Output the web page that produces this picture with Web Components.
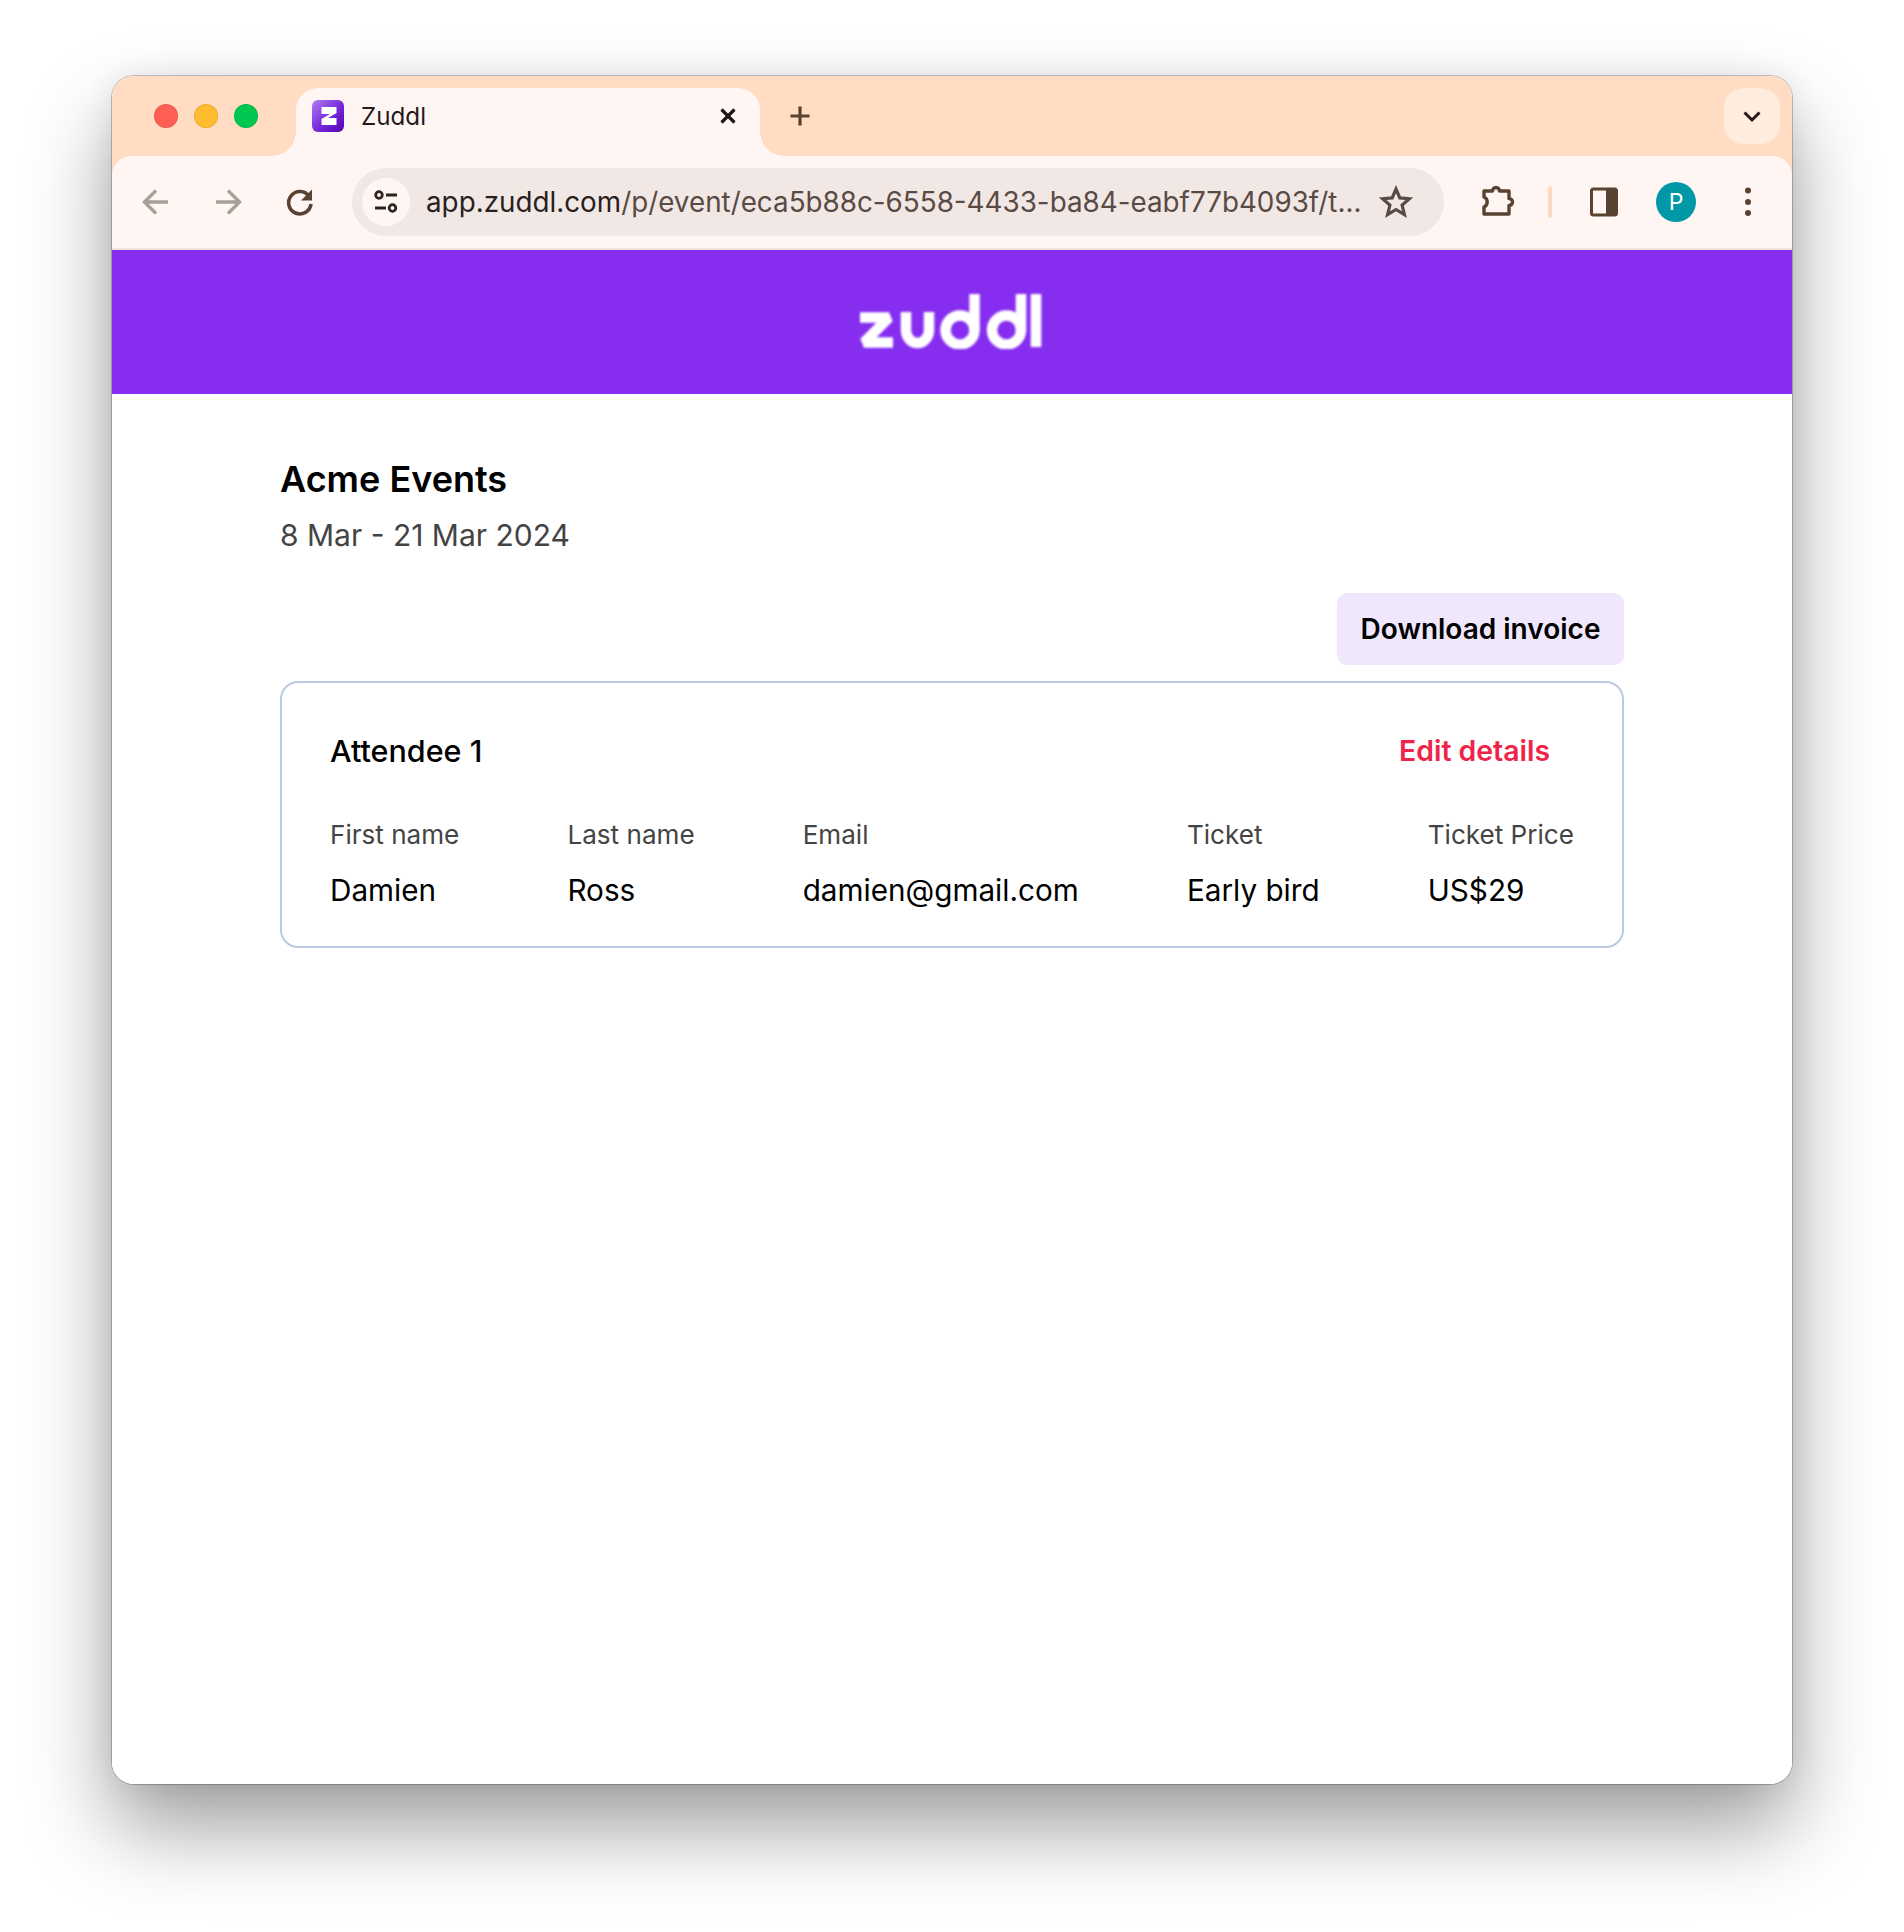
<!DOCTYPE html>
<html lang="en">
<head>
<meta charset="utf-8">
<title>Zuddl</title>
<style>
  html, body { margin: 0; background: #fff; }
  body { font-family: "Inter", "Liberation Sans", sans-serif; }
</style>
</head>
<body>
<browser-window>
  <tab-strip title-text="Zuddl"></tab-strip>
  <browser-toolbar domain="app.zuddl.com" path="/p/event/eca5b88c-6558-4433-ba84-eabf77b4093f/t..."></browser-toolbar>
  <brand-bar></brand-bar>
  <event-page name="Acme Events" dates="8 Mar - 21 Mar 2024">
    <attendee-card heading="Attendee 1">
      <attendee-field label="First name" value="Damien"></attendee-field>
      <attendee-field label="Last name" value="Ross"></attendee-field>
      <attendee-field label="Email" value="damien@gmail.com"></attendee-field>
      <attendee-field label="Ticket" value="Early bird"></attendee-field>
      <attendee-field label="Ticket Price" value="US$29"></attendee-field>
    </attendee-card>
  </event-page>
</browser-window>

<script>
class BrowserWindow extends HTMLElement {
  constructor() {
    super();
    this.attachShadow({mode: "open"}).innerHTML = `
    <style>
      :host {
        display: block;
        box-sizing: border-box;
        padding: 76px 112px 148px;
        height: 1932px;
        background: #fff;
      }
      .frame {
        display: flex;
        flex-direction: column;
        height: 1708px;
        background: #fff;
        border-radius: 22px;
        overflow: hidden;
      }
      .shadow {
        border-radius: 22px;
        box-shadow: 0 0 0 1px rgba(0,0,0,.22), 0 44px 84px rgba(0,0,0,.38), 0 0 30px rgba(0,0,0,.08);
      }
    </style>
    <div class="shadow"><div class="frame"><slot></slot></div></div>`;
  }
}

class TabStrip extends HTMLElement {
  constructor() {
    super();
    this.attachShadow({mode: "open"});
  }
  connectedCallback() {
    const title = this.getAttribute("title-text");
    this.shadowRoot.innerHTML = `
    <style>
      :host {
        display: flex;
        height: 80px;
        box-sizing: border-box;
        padding: 12px 12px 0 42px;
        background: #ffdcc2;
      }
      .lights { display: flex; gap: 16px; align-items: center; height: 56px; }
      .lights i { display: block; width: 24px; height: 24px; border-radius: 50%; box-sizing: border-box; border: 1px solid rgba(0,0,0,.08); }
      .tab {
        position: relative;
        display: flex;
        align-items: center;
        width: 464px;
        height: 68px;
        box-sizing: border-box;
        margin-left: 38px;
        padding: 0 16px 12px 16px;
        background: #fff6f3;
        border-radius: 22px 22px 0 0;
      }
      .tab::before, .tab::after {
        content: "";
        position: absolute;
        bottom: 0;
        width: 24px;
        height: 24px;
      }
      .tab::before { left: -24px; background: radial-gradient(circle at 0 0, transparent 23.5px, #fff6f3 24px); }
      .tab::after { right: -24px; background: radial-gradient(circle at 100% 0, transparent 23.5px, #fff6f3 24px); }
      .label { margin-left: 17px; flex: 1; font: 400 24.2px "Inter", sans-serif; color: #24181a; }
      svg { display: block; }
      .plus { margin-left: 22px; height: 56px; display: flex; align-items: center; }
      .more {
        margin-left: auto;
        width: 56px;
        height: 56px;
        border-radius: 20px;
        background: #feecdd;
        display: flex;
        align-items: center;
        justify-content: center;
      }
    </style>
    <div class="lights">
      <i style="background:#ff5f57"></i><i style="background:#febc2e"></i><i style="background:#00c74f"></i>
    </div>
    <div class="tab">
      <svg width="32" height="32" viewBox="0 0 32 32">
        <defs><linearGradient id="fav" x1="0" y1="0" x2="1" y2="1"><stop offset="0" stop-color="#b07df2"/><stop offset=".5" stop-color="#7a2fdc"/><stop offset="1" stop-color="#5200b0"/></linearGradient></defs>
        <rect width="32" height="32" rx="6" fill="url(#fav)"/>
        <path d="M9.500 7H24.500V13L16 18H24.500V25H9.500V19L18 14H9.500Z" fill="#fff"/>
      </svg>
      <span class="label">${title}</span>
      <svg width="24" height="24" viewBox="0 0 24 24" style="margin-right:4px"><path d="M5.500 5.500l13 13M18.500 5.500l-13 13" stroke="#1d1413" stroke-width="3.200" fill="none"/></svg>
    </div>
    <div class="plus">
      <svg width="36" height="36" viewBox="0 0 36 36"><path d="M18 8.500v19M8.500 18h19" stroke="#5a4232" stroke-width="3.200" fill="none"/></svg>
    </div>
    <div class="more">
      <svg width="20" height="14" viewBox="0 0 20 14"><path d="M2.500 3.500L10 11l7.500-7.500" stroke="#24181a" stroke-width="3" fill="none"/></svg>
    </div>`;
  }
}

class BrowserToolbar extends HTMLElement {
  constructor() {
    super();
    this.attachShadow({mode: "open"});
  }
  connectedCallback() {
    const domain = this.getAttribute("domain");
    const path = this.getAttribute("path");
    this.shadowRoot.innerHTML = `
    <style>
      :host {
        display: block;
        background: #ffdcc2;
      }
      .bar {
        display: flex;
        align-items: center;
        height: 92px;
        padding-left: 26px;
        background: #fff6f3;
        border-radius: 20px 20px 0 0;
        border-bottom: 2px solid #efe1dc;
      }
      svg { display: block; flex: none; }
      .nav { margin-right: 36px; }
      .omni {
        display: flex;
        align-items: center;
        flex: none;
        width: 1092px;
        height: 68px;
        box-sizing: border-box;
        margin-left: -2px;
        padding: 0 31px 0 10px;
        border-radius: 34px;
        background: #f1e8e6;
      }
      .tune {
        width: 48px;
        height: 48px;
        border-radius: 50%;
        background: #fff6f3;
        display: flex;
        align-items: center;
        justify-content: center;
        flex: none;
      }
      .url { margin-left: 16px; flex: 1; font: 400 27.800px "Inter", sans-serif; white-space: nowrap; overflow: hidden; color: #5a4a44; }
      .url b { font-weight: 400; color: #2a1f1c; }
      .sep { width: 4px; height: 32px; border-radius: 2px; background: #ffd9bd; margin: 0 34px 0 32px; flex: none; }
      .avatar {
        width: 40px;
        height: 40px;
        border-radius: 50%;
        background: #0097a7;
        color: #fff;
        font: 400 23px "Inter", sans-serif;
        display: flex;
        align-items: center;
        justify-content: center;
        margin: 0 34px;
        flex: none;
      }
    </style>
    <div class="bar">
      <svg class="nav" width="36" height="36" viewBox="0 0 36 36"><path d="M30 18H8M18 6.500L6.500 18 18 29.500" stroke="#a89e9a" stroke-width="3.400" fill="none"/></svg>
      <svg class="nav" width="36" height="36" viewBox="0 0 36 36"><path d="M6 18h22M18 6.500L29.500 18 18 29.500" stroke="#a89e9a" stroke-width="3.400" fill="none"/></svg>
      <svg class="nav" width="36" height="36" viewBox="0 0 36 36"><path d="M27.200 12.500A11.200 11.200 0 1 0 29 20" stroke="#5a4232" stroke-width="3.600" fill="none"/><path d="M30 5.500v11h-11z" fill="#5a4232"/></svg>
      <div class="omni">
        <div class="tune">
          <svg width="28" height="28" viewBox="0 0 28 28" fill="none" stroke="#2f2320" stroke-width="2.800">
            <circle cx="7" cy="7" r="3.300"/><path d="M14 7h11M3 20h11"/><circle cx="20.500" cy="20" r="3.300"/>
          </svg>
        </div>
        <div class="url"><b>${domain}</b>${path}</div>
        <svg width="34" height="34" viewBox="0 0 34 34"><path d="M17 4l3.800 8.900 9.700.8-7.400 6.400 2.300 9.500-8.400-5.100-8.400 5.100 2.300-9.500-7.400-6.400 9.700-.8z" fill="none" stroke="#5a4a44" stroke-width="3.200"/></svg>
      </div>
      <svg style="margin-left:36px" width="36" height="36" viewBox="0 0 36 36"><path d="M4 7H12.500A3.500 3.500 0 0 1 19.500 7H29V14.500A3.500 3.500 0 0 1 29 21.500V30H4V23A5.500 5.500 0 0 0 4 13Z" fill="none" stroke="#5a4232" stroke-width="3.400" stroke-linejoin="round"/></svg>
      <div class="sep"></div>
      <svg width="36" height="36" viewBox="0 0 36 36"><rect x="5.500" y="5" width="25" height="26" rx="2" fill="#fff6f3" stroke="#5a4232" stroke-width="3"/><path d="M20 5h9a2 2 0 0 1 2 2v22a2 2 0 0 1-2 2h-9z" fill="#5a4232"/></svg>
      <div class="avatar">P</div>
      <svg width="36" height="36" viewBox="0 0 36 36" fill="#5a4232"><circle cx="18" cy="6.500" r="3"/><circle cx="18" cy="18" r="3"/><circle cx="18" cy="29" r="3"/></svg>
    </div>`;
  }
}

class BrandBar extends HTMLElement {
  constructor() {
    super();
    this.attachShadow({mode: "open"}).innerHTML = `
    <style>
      :host {
        display: flex;
        align-items: center;
        justify-content: center;
        height: 144px;
        background: #862df0;
      }
      svg { display: block; filter: blur(.9px); margin: -3px 2px 0 0; }
    </style>
    <svg width="184" height="56" viewBox="0 0 184 56" fill="none" stroke="#fff" stroke-width="10.500" role="img" aria-label="zuddl">
      <path d="M1 24.500H30L5 49.500H34" stroke-linejoin="bevel"/>
      <path d="M47 19V37A11.500 13 0 0 0 70 37V19"/>
      <circle cx="101" cy="37" r="14.500"/>
      <path d="M115.500 1V38"/>
      <circle cx="147.500" cy="37" r="14.500"/>
      <path d="M162 1V38"/>
      <path d="M177 1V54"/>
    </svg>`;
  }
}

class EventPage extends HTMLElement {
  constructor() {
    super();
    this.attachShadow({mode: "open"});
  }
  connectedCallback() {
    this.shadowRoot.innerHTML = `
    <style>
      :host {
        display: block;
        flex: 1;
        padding: 60px 168px 0;
        background: #fff;
        font-family: "Inter", sans-serif;
      }
      h1 { margin: 0; font-size: 36px; line-height: 50px; font-weight: 600; color: #000; }
      p { margin: 9px 0 0; font-size: 30px; line-height: 44px; color: #444; }
      .actions { display: flex; justify-content: flex-end; margin: 36px 0 16px; }
      button {
        width: 287px;
        height: 72px;
        border: 0;
        border-radius: 10px;
        background: #f0e7fd;
        font: 600 28px "Inter", sans-serif;
        color: #000;
        padding-bottom: 2px;
      }
    </style>
    <h1>${this.getAttribute("name")}</h1>
    <p>${this.getAttribute("dates")}</p>
    <div class="actions"><button>Download invoice</button></div>
    <slot></slot>`;
  }
}

class AttendeeCard extends HTMLElement {
  constructor() {
    super();
    this.attachShadow({mode: "open"});
  }
  connectedCallback() {
    this.shadowRoot.innerHTML = `
    <style>
      :host {
        display: block;
        box-sizing: border-box;
        height: 267px;
        padding: 47px 48px 0;
        border: 2px solid #b9cbe0;
        border-radius: 18px;
        font-family: "Inter", sans-serif;
      }
      .head { display: flex; justify-content: space-between; align-items: center; height: 40px; }
      h2 { margin: 0; font-size: 30.500px; font-weight: 500; color: #000; }
      a { margin-right: 24px; font-size: 28.400px; font-weight: 600; color: #ee2449; }
      .fields { display: flex; justify-content: space-between; margin-top: 43px; }
    </style>
    <div class="head"><h2>${this.getAttribute("heading")}</h2><a>Edit details</a></div>
    <div class="fields"><slot></slot></div>`;
  }
}

class AttendeeField extends HTMLElement {
  constructor() {
    super();
    this.attachShadow({mode: "open"});
  }
  connectedCallback() {
    this.shadowRoot.innerHTML = `
    <style>
      :host { display: block; font-family: "Inter", sans-serif; }
      .l { font-size: 26.100px; line-height: 44px; color: #444; }
      .v { margin-top: 11px; font-size: 29.700px; line-height: 44px; color: #000; }
    </style>
    <div class="l">${this.getAttribute("label")}</div>
    <div class="v">${this.getAttribute("value")}</div>`;
  }
}

customElements.define("browser-window", BrowserWindow);
customElements.define("tab-strip", TabStrip);
customElements.define("browser-toolbar", BrowserToolbar);
customElements.define("brand-bar", BrandBar);
customElements.define("event-page", EventPage);
customElements.define("attendee-card", AttendeeCard);
customElements.define("attendee-field", AttendeeField);
</script>
</body>
</html>
